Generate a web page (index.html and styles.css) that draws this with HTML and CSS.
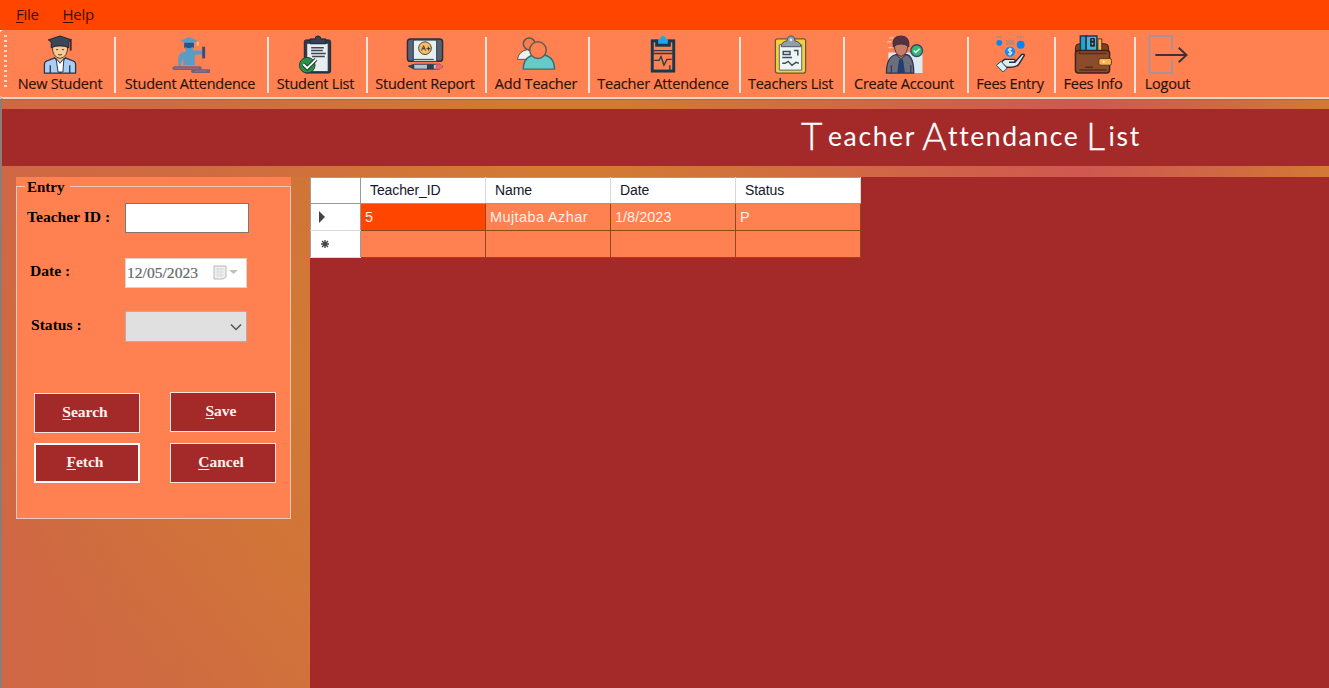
FILE: index.html
```html
<!DOCTYPE html>
<html lang="en">
<head>
<meta charset="utf-8">
<title>Teacher Attendance List</title>
<link rel="stylesheet" href="styles.css">
</head>
<body>
<div class="window">
<nav class="menubar"><span class="menu-file"><u>F</u>ile</span><span class="menu-help"><u>H</u>elp</span></nav>
<div class="toolbar">
  <div class="grip"></div>
  <div class="tool t1"><svg viewBox="0 0 36 40"><path d="M2 39v-9q0-3 4-4l8-3h8l8 3q4 1 4 4v9z" fill="#a9cdf5" stroke="#26364c" stroke-width="1.3"/><path d="M13 23l5 5 5-5v-4H13z" fill="#f2c089"/><path d="M12 23l6 7 6-7M18 30v9M8 31v8M28 31v8" fill="none" stroke="#26364c" stroke-width="1.3"/><path d="M14 24l4 5 4-5-1 14h-5z" fill="#fff" stroke="#26364c"/><path d="M10 11q0 12 8 13 8-1 8-13z" fill="#f8ca91" stroke="#493a38"/><path d="M6 5l12-4 12 4-3 2v6q-9-4-18 0V7z" fill="#3b4657" stroke="#1e2530"/><path d="M29 6v10" stroke="#4c2733" stroke-width="2"/><path d="M14 15h2m4 0h2m-6 5q2 1 4 0" stroke="#493a38" fill="none"/></svg><span>New Student</span></div>
  <i class="sep"></i>
  <div class="tool t2"><svg viewBox="0 0 40 40"><path d="M10 6l9-4 9 4-9 4z" fill="#5a9cc5"/><path d="M14 8h10v5q-5 3-10 0z" fill="#23568b"/><path d="M15 12q4 3 8 0v4h10v4h-8v11H13v-8l-3 9H8q-1-12 3-14l5-1z" fill="#5a9cc5"/><path d="M28 7v4" stroke="#efca83" stroke-width="2"/><path d="M34 12v12" stroke="#3b4b78" stroke-width="3"/><path d="M4 34h26M23 37h18" stroke="#775f7b" stroke-width="4" stroke-linecap="round"/><path d="M4 34h25M25 37h12" stroke="#9b7389"/></svg><span>Student Attendence</span></div>
  <i class="sep"></i>
  <div class="tool t3"><svg viewBox="0 0 36 40"><rect x="6" y="5" width="27" height="34" rx="2" fill="#303b4b" stroke="#1d2735"/><path d="M9 9h21v28H9z" fill="#e9edf0"/><path d="M12 9V4h5q0-3 3-3t3 3h5v5z" fill="#344054" stroke="#1d2735"/><path d="M13 13h13M13 16h12M13 19h15M14 22h13" stroke="#3f4852" stroke-width="1.5"/><circle cx="9" cy="31" r="8" fill="#279348" stroke="#233f36"/><path d="M5 30l4 4 9-9" fill="none" stroke="#203b32" stroke-width="4"/><path d="M5 30l4 4 9-9" fill="none" stroke="#fff" stroke-width="2"/></svg><span>Student List</span></div>
  <i class="sep"></i>
  <div class="tool t4"><svg viewBox="0 0 40 40"><rect x="2" y="4" width="36" height="23" rx="3" fill="#596273" stroke="#292e3c" stroke-width="1.5"/><path d="M8 5h24v22H8z" fill="#e4f1ef" stroke="#303647"/><path d="M8 5h24M8 25h21" stroke="#31384a"/><circle cx="20" cy="13.5" r="6.5" fill="#f6bb65" stroke="#51413b"/><path d="M16.5 16l2-5 2 5m-3-2h2m2 0h4m-2-2v4" fill="none" stroke="#33333a"/><path d="M3 32l6-2h26l3 2v1l-3 2H9z" fill="#b8c2ce" stroke="#333c4e"/><path d="M3 32l6-2v5zM22 30h7v5h-7z" fill="#333c4e"/><path d="M31 30h4q3 0 3 2.5T35 35h-4z" fill="#ee6261"/></svg><span>Student Report</span></div>
  <i class="sep"></i>
  <div class="tool t5"><svg viewBox="0 0 40 40"><path d="M1 25q1-8 10-10l8 4-8 6z" fill="#eeeeeb" stroke="#51595a"/><circle cx="13" cy="9" r="6" fill="#fa7c4b" stroke="#51595a" stroke-width="1.5"/><path d="M7 35q0-14 14-15h4q14 1 14 15z" fill="#66cbc8" stroke="#356f74" stroke-width="1.5"/><circle cx="22" cy="15.5" r="8.5" fill="#ff8050" stroke="#625c57" stroke-width="1.5"/></svg><span>Add Teacher</span></div>
  <i class="sep"></i>
  <div class="tool t6"><svg viewBox="0 0 30 40"><rect x="4" y="6" width="22" height="31" fill="#ff8050" stroke="#17384e" stroke-width="3"/><path d="M7 5h16v7H7z" fill="#17384e"/><path d="M10 9V4h2q0-3 3-3t3 3h2v5z" fill="#22a6e2"/><path d="M5 16h20M5 19h20M6 26h5l2-4 3 9 3-6h5M22 31v5" fill="none" stroke="#263e4d" stroke-width="1.4"/></svg><span>Teacher Attendence</span></div>
  <i class="sep"></i>
  <div class="tool t7"><svg viewBox="0 0 36 40"><rect x="2" y="4" width="31" height="35" rx="2" fill="#f8ce38" stroke="#605a45" stroke-width="1.3"/><path d="M6 10h23v26H6z" fill="#eef5f5" stroke="#526473"/><path d="M8 12q0-5 6-6 0-5 4-5t4 5q6 1 6 6z" fill="#929eab" stroke="#47515e"/><circle cx="18" cy="5" r="1.5" fill="#e0e8e7"/><path d="M10 17h7v3h-7zM9 23h10m2-7h4v5M9 29h3l3-2 4 4 4-3 3 1" fill="none" stroke="#3d4c5c" stroke-width="1.5"/></svg><span>Teachers List</span></div>
  <i class="sep"></i>
  <div class="tool t8"><svg viewBox="0 0 40 40"><path d="M4 18h35v21H4z" fill="#dce9f2"/><path d="M2 39q0-17 10-19h10q8 1 8 19z" fill="#6b6f7c" stroke="#343054" stroke-width="1.3"/><path d="M13 20l4 4 4-4v-4h-8z" fill="#b97562"/><path d="M10 9q0 11 7 13 7-2 7-13z" fill="#c77d63" stroke="#483245"/><path d="M9 12q-2-11 8-11 9 0 8 11-8-6-16 0z" fill="#57313c" stroke="#323057"/><path d="M15 25h4l2 14h-8z" fill="#243e70"/><path d="M12 20l5 5 5-5M7 31v8m20-8v8" fill="none" stroke="#272c50"/><path d="M5 3h4M3 7h4M4 13h4" stroke="#fbdad0"/><circle cx="33" cy="16" r="6" fill="#35b776" stroke="#394967" stroke-width="1.5"/><path d="M30 16l2 2 4-4" stroke="#dff8e7" stroke-width="1.5" fill="none"/></svg><span>Create Account</span></div>
  <i class="sep"></i>
  <div class="tool t9"><svg viewBox="0 0 36 40"><path d="M4 2h6m15 0h7M14 5l2 3 2-3 2 3 2-3m-8 4h8" stroke="#948c82" stroke-width="1.4" stroke-dasharray="2 1" fill="none"/><circle cx="7" cy="8" r="3" fill="#0a84f2"/><circle cx="29" cy="10" r="4" fill="#0a84f2"/><circle cx="18" cy="17" r="5.3" fill="#168bf0"/><path d="M20 14.5q-4-1-4 1 0 1 2 1.5 2 0 2 1.5 0 2-4 1M18 13v8" stroke="#fff" fill="none"/><path d="M9 29q2-5 6-4h7q3 1 0 3h-5 6l7-8q4-1 2 2l-5 8q-2 3-8 3h-5z" fill="#e4e9ee" stroke="#2e3038" stroke-width="1.5"/><path d="M9 27l6 7-4 4-7-7z" fill="#d7f2fb" stroke="#2b4351"/></svg><span>Fees Entry</span></div>
  <i class="sep"></i>
  <div class="tool t10"><svg viewBox="0 0 40 40"><rect x="2" y="9" width="34" height="15" rx="4" fill="#81401f" stroke="#3c1d16"/><path d="M7 1h6v16H7z" fill="#27a1cc" stroke="#17394c" stroke-width="1.5"/><path d="M13 1h11v16H13z" fill="#45b4dc" stroke="#153b4e" stroke-width="1.5"/><rect x="17" y="3" width="5" height="9" rx="1" fill="#252732"/><circle cx="19.5" cy="5" r="1" fill="#ef634f"/><circle cx="19.5" cy="9" r="1" fill="#5de08c"/><path d="M25 4h4v13h-4z" fill="#f2b65d" stroke="#51301f"/><rect x="2" y="16" width="35" height="23" rx="3" fill="#8b4c2b" stroke="#402119" stroke-width="1.5"/><path d="M6 17v2h28M6 36h28" fill="none" stroke="#5b2b1d" stroke-width="1.5"/><rect x="26" y="24" width="13" height="7" rx="2" fill="#f9b449" stroke="#60321e"/><circle cx="31" cy="27.5" r="1" fill="#fff"/><path d="M12 33h8" stroke="#351f1b"/></svg><span>Fees Info</span></div>
  <i class="sep"></i>
  <div class="tool t11"><svg viewBox="0 0 40 40"><path d="M24 14V1H1v38h23V26" fill="none" stroke="#a9919c" stroke-width="2"/><path d="M7 20.5h31M31 13l8 7.5-8 7.5" fill="none" stroke="#3f3037" stroke-width="2"/></svg><span>Logout</span></div>
</div>
<main class="workspace">
  <header class="banner"><h1><b>T</b>eacher <b class="a">A</b>ttendance <b class="l">L</b>ist</h1></header>
  <div class="content">
    <section class="entry"><div class="frame">
      <h2>Entry</h2>
      <div class="fields">
        <label class="id">Teacher ID :</label><input class="text" aria-label="Teacher ID">
        <label class="date">Date :</label><div class="picker"><span>12/05/2023</span><svg viewBox="0 0 28 18"><path d="M2 2h12v11l-3 2H2z" fill="#f0eeee" stroke="#bcb7b7"/><path d="M4 5h8M4 8h8M4 11h8M6 4v9M9 4v9" stroke="#d3d4dc" stroke-width=".7"/><path d="M17 6h9l-4.5 4z" fill="#c1c1b9"/></svg></div>
        <label class="status">Status :</label><div class="combo"><svg viewBox="0 0 12 8"><path d="M1 1.5l5 5 5-5" fill="none" stroke="#555" stroke-width="1.5"/></svg></div>
      </div>
      <div class="buttons"><button class="search"><span><u>S</u>earch</span></button><button class="save"><span><u>S</u>ave</span></button><button class="fetch"><span><u>F</u>etch</span></button><button class="cancel"><span><u>C</u>ancel</span></button></div>
    </div></section>
    <section class="gridpane"><table>
      <tr class="head"><th></th><th>Teacher_ID</th><th>Name</th><th>Date</th><th>Status</th></tr>
      <tr><th><svg viewBox="0 0 8 12"><path d="M1 0l6 6-6 6z" fill="#444"/></svg></th><td class="selected">5</td><td class="name">Mujtaba Azhar</td><td>1/8/2023</td><td>P</td></tr>
      <tr><th><svg class="star" viewBox="0 0 8 8"><path d="M4 0v8M0 4h8M1 1l6 6M7 1L1 7" stroke="#444" stroke-width="1.4"/></svg></th><td></td><td></td><td></td><td></td></tr>
    </table></section>
  </div>
</main>
</div>
</body>
</html>
```
FILE: styles.css
```css
* { box-sizing: border-box; }
body { margin: 0; overflow: hidden; font-family: "Open Sans", sans-serif; }
.window { width: 1329px; height: 688px; display: flex; flex-direction: column; }
.menubar { height: 30px; background: #ff4500; display: flex; gap: 24px; padding: 3px 16px; font-size: 15px; line-height: 22px; color: #421000; }
.menubar span { letter-spacing: -.3px; }
u { text-underline-offset: 2px; text-decoration-thickness: 1px; }
.toolbar { height: 69px; background: #ff8050; border-bottom: 2px solid #e4d5ca; box-shadow: 0 1px #8c7366; position: relative; z-index: 1; display: flex; padding: 5px 0 0 4px; border-radius: 4px 0 0 4px; }
.grip { width: 3px; height: 55px; background: repeating-linear-gradient(#f4d9cc 0 2px, transparent 2px 5px); }
.tool { height: 58px; display: flex; flex-direction: column; align-items: center; white-space: nowrap; color: #29130e; padding-right: 3px; }
.tool svg { width: 40px; height: 39px; flex: none; }
.tool span { font-size: 14.5px; line-height: 20px; letter-spacing: -.22px; -webkit-text-stroke: .15px; }
.sep { width: 2px; height: 56px; margin-top: 2px; background: #f5e5df; flex: none; }
.t1 { width: 107px; padding-right: 1px; }
.t2 { width: 151px; }
.t3 { width: 97px; padding-right: 4px; }
.t4 { width: 117px; }
.t5 { width: 101px; }
.t6 { width: 149px; }
.t7 { width: 102px; }
.t8 { width: 122px; padding-right: 4px; }
.t9 { width: 85px; }
.t10 { width: 78px; padding-right: 4px; }
.t11 { width: 65px; padding-right: 2px; }
.workspace { flex: 1; min-height: 0; border-left: 2px solid #8b7c76; display: flex; flex-direction: column; padding-top: 10px; background: linear-gradient(90deg, #cf6744 0, #cf6c40 200px, #d27a34 530px, #d27a34 610px, #cf5850 1080px, #cf6644 1200px, #d27a34 1329px); }
.banner { height: 57px; background: #a42a2a; padding-left: 799px; }
.banner h1 { margin: 0; font: 400 26.5px/54px Lato, sans-serif; color: #fff; white-space: nowrap; letter-spacing: 1.6px; word-spacing: -1.5px; }
.banner b { font-size: 37px; font-weight: 300; line-height: 1px; vertical-align: -4px; -webkit-text-stroke: .4px; }
.banner b:first-child { margin-right: 4px; }
.banner .l { margin-right: 2px; }
.content { flex: 1; display: flex; padding: 11px 0 0 14px; }
.workspace .content { background: radial-gradient(ellipse 380px 340px at 340px 200px, #d27a34, transparent) 0 11px no-repeat; }
.entry { width: 275px; height: 342px; background: #ff8050; padding-top: 9px; font-family: "Liberation Serif", serif; font-weight: bold; flex: none; }
.frame { height: 333px; border: 1px solid #eac9bb; }
.frame h2 { display: block; width: 45px; height: 18px; margin: -9px 0 0 8px; padding-left: 2px; background: #ff8050; font-size: 15px; line-height: 19px; }
.fields { height: 196px; display: grid; grid-template: 54px 54px 54px / 98px 124px; align-content: start; padding: 7px 0 0 10px; font-size: 15.6px; }
.fields label { line-height: 27px; white-space: nowrap; }
.fields .date { padding-left: 3px; }
.fields .status { padding-left: 4px; }
.text { width: 124px; height: 30px; border: 1px solid #85746c; border-radius: 0; padding: 0; margin: 0; }
.picker { width: 122px; height: 30px; margin-top: 1px; background: #fff; border: 1px solid #dfd1cb; color: #65676c; font-weight: 400; line-height: 28px; padding: 0 6px 0 1px; display: flex; align-items: center; justify-content: space-between; -webkit-text-stroke: .2px; }
.picker svg { width: 28px; height: 18px; }
.combo { width: 122px; height: 31px; background: #e0e0e0; border: 1px solid #bcaaa3; padding: 11px 4px; display: flex; justify-content: flex-end; }
.combo svg { width: 12px; height: 8px; }
.buttons { display: grid; grid-template: 51px 41px / 136px 107px; padding-left: 17px; }
button { width: 106px; height: 40px; padding: 0 0 2px; border: 1px solid #f5e5df; border-radius: 0; background: #a42a2a; color: #fff0ef; font: bold 15.5px/20px "Liberation Serif", serif; }
button span { padding-right: 4px; }
.search { margin-top: 1px; }
.fetch { border: 2px solid #fff; }
.gridpane { margin-left: 19px; flex: 1; background: #a42a2a; }
table { border-collapse: collapse; table-layout: fixed; width: 551px; height: 80px; font: 14px/20px "Liberation Sans", sans-serif; }
tr { height: 27px; }
.head { height: 26px; }
th { background: #fff; border: 1px solid #d9d9d9; font-weight: 400; text-align: left; padding: 0 0 2px 9px; color: #16162a; width: 125px; letter-spacing: -.1px; }
th:first-child { width: 50px; padding: 0 0 0 7px; border-left-color: #a09c9a; border-right-color: #999; }
.head th { border-top-color: #a09c9a; border-bottom-color: #999; }
td { background: #ff8050; border: 1px solid #8f4817; padding: 0 0 0 4px; color: #fff0e8; font-size: 14.5px; }
.selected { background: #ff4500; }
.name { letter-spacing: .4px; }
table svg { width: 8px; height: 12px; display: block; }
table .star { width: 8px; height: 8px; margin-left: 3px; }
```
